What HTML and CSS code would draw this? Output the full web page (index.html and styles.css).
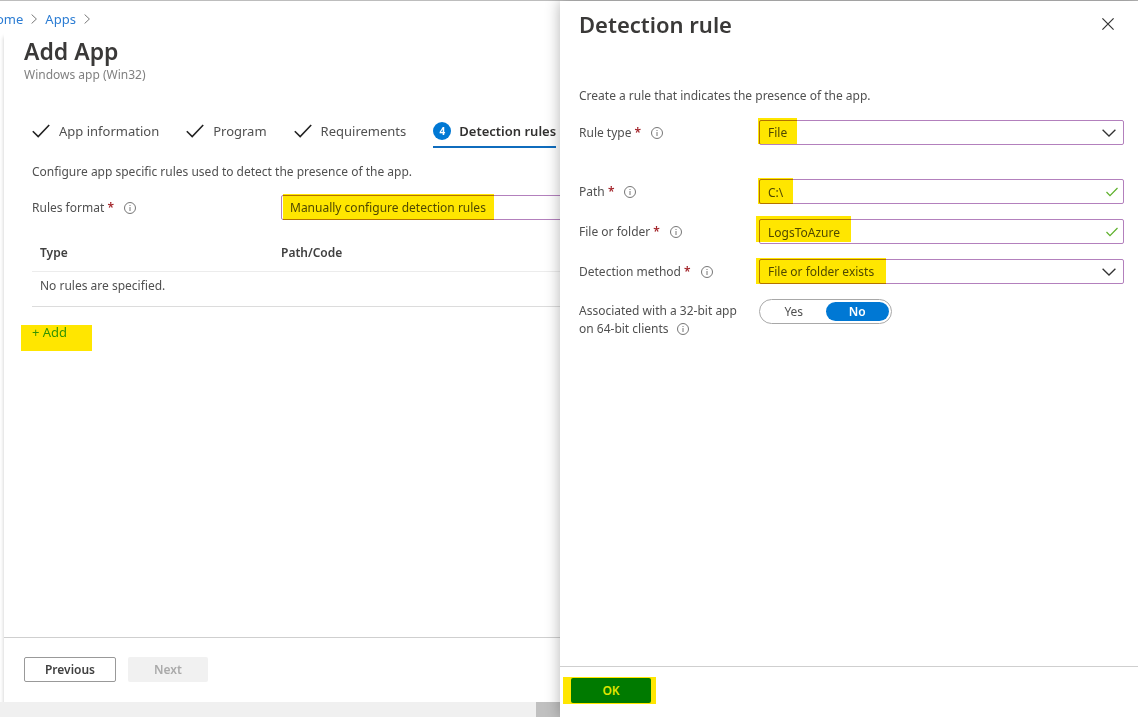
FILE: index.html
```html
<!DOCTYPE html>
<html lang="en">
<head>
<meta charset="utf-8">
<title>Add App - Detection rule</title>
<link rel="stylesheet" href="styles.css">
</head>
<body>
<svg class="sprite" aria-hidden="true">
  <symbol id="info" viewBox="0 0 12 12"><circle cx="6" cy="6" r="5.5" fill="none" stroke="currentColor" stroke-width="0.9"/><path d="M6 5v4M6 3v1" fill="none" stroke="currentColor" stroke-width="0.9"/></symbol>
  <symbol id="done" viewBox="0 0 18 14"><path d="M0.8 7.2l5.4 5.4L17.2 1" fill="none" stroke="currentColor" stroke-width="1.6"/></symbol>
  <symbol id="valid" viewBox="0 0 12 10"><path d="M0.5 5l3.5 3.7L11.5 1" fill="none" stroke="currentColor" stroke-width="1.2"/></symbol>
  <symbol id="down" viewBox="0 0 14 8"><path d="M0.6 0.7L7 7l6.4-6.3" fill="none" stroke="currentColor" stroke-width="1.3"/></symbol>
  <symbol id="right" viewBox="0 0 6 10"><path d="M0.6 0.5L5.4 5l-4.8 4.5" fill="none" stroke="currentColor"/></symbol>
  <symbol id="close" viewBox="0 0 12 12"><path d="M0.4 0.4l11.2 11.2M11.6 0.4L0.4 11.6" fill="none" stroke="currentColor" stroke-width="1.2"/></symbol>
</svg>
<div class="portal">
  <main class="workspace">
    <nav class="crumbs" aria-label="Breadcrumb">
      <a href="#home">ome</a><svg class="crumb-icon"><use href="#right"/></svg>
      <a href="#apps">Apps</a><svg class="crumb-icon"><use href="#right"/></svg>
    </nav>
    <section class="blade">
      <header class="blade-head">
        <h1>Add App</h1>
        <p class="subtitle">Windows app (Win32)</p>
      </header>
      <div class="blade-body">
        <div class="steps" role="tablist">
          <button class="step" role="tab"><svg class="done"><use href="#done"/></svg>App information</button>
          <button class="step" role="tab"><svg class="done"><use href="#done"/></svg>Program</button>
          <button class="step" role="tab"><svg class="done"><use href="#done"/></svg>Requirements</button>
          <button class="step current" role="tab" aria-selected="true"><span class="number">4</span>Detection rules</button>
        </div>
        <p class="intro">Configure app specific rules used to detect the presence of the app.</p>
        <div class="format-row">
          <label for="format">Rules format <span class="star">*</span><svg class="info"><use href="#info"/></svg></label>
          <div class="field">
            <select id="format"><option>Manually configure detection rules</option></select>
            <span class="mark mark-format"></span>
          </div>
        </div>
        <table class="rules">
          <thead><tr><th class="type">Type</th><th>Path/Code</th></tr></thead>
          <tbody><tr><td colspan="2">No rules are specified.</td></tr></tbody>
        </table>
        <div class="add"><a href="#add">+ Add</a></div>
      </div>
      <footer class="blade-foot">
        <button class="btn previous">Previous</button>
        <button class="btn next" disabled>Next</button>
      </footer>
    </section>
    <div class="scrollbar"><div class="thumb"></div></div>
  </main>
  <aside class="panel">
    <header class="panel-head">
      <h2>Detection rule</h2>
      <button class="close" aria-label="Close"><svg><use href="#close"/></svg></button>
    </header>
    <form class="panel-body">
      <p class="lead">Create a rule that indicates the presence of the app.</p>
      <div class="row first">
        <label for="ruletype">Rule type <span class="star">*</span><svg class="info"><use href="#info"/></svg></label>
        <div class="field"><select id="ruletype"><option>File</option></select><svg class="down"><use href="#down"/></svg><span class="mark mark-type"></span></div>
      </div>
      <div class="row">
        <label for="path">Path <span class="star">*</span><svg class="info"><use href="#info"/></svg></label>
        <div class="field"><input id="path" type="text" value="C:\"><svg class="valid"><use href="#valid"/></svg><span class="mark mark-path"></span></div>
      </div>
      <div class="row">
        <label for="file">File or folder <span class="star">*</span><svg class="info"><use href="#info"/></svg></label>
        <div class="field"><input id="file" type="text" value="LogsToAzure"><svg class="valid"><use href="#valid"/></svg><span class="mark mark-file"></span></div>
      </div>
      <div class="row">
        <label for="method">Detection method <span class="star">*</span><svg class="info"><use href="#info"/></svg></label>
        <div class="field"><select id="method"><option>File or folder exists</option></select><svg class="down"><use href="#down"/></svg><span class="mark mark-method"></span></div>
      </div>
      <div class="row">
        <span class="long" id="bits">Associated with a 32-bit app<br>on 64-bit clients <svg class="info"><use href="#info"/></svg></span>
        <div class="toggle" role="radiogroup" aria-labelledby="bits">
          <label><input type="radio" name="bits"><span>Yes</span></label>
          <label><input type="radio" name="bits" checked><span>No</span></label>
        </div>
      </div>
    </form>
    <footer class="panel-foot"><div class="ok-wrap"><button class="btn ok">OK</button></div></footer>
  </aside>
</div>
</body>
</html>
```
FILE: styles.css
```css
* { box-sizing: border-box; }
body {
  margin: 0;
  font: 12px/18px "Noto Sans", "Open Sans", sans-serif;
  color: #505050;
  background: #fff;
}
h1, h2, p { margin: 0; }
h1, h2 { line-height: 32px; font-weight: 600; color: #3a3938; }
h1 { font-size: 23px; }
h2 { font-size: 22px; }
button, input, select { font: inherit; color: inherit; }
button { cursor: pointer; }
a { color: #2b7cd3; text-decoration: none; }
.sprite { position: absolute; width: 0; height: 0; }

.portal {
  display: grid;
  grid-template-columns: minmax(0, 1fr) 578px;
  min-height: 100vh;
  border-top: 1px solid #bdbdbd;
}

/* Left workspace */
.workspace { display: flex; flex-direction: column; overflow: hidden; }
.crumbs {
  display: flex;
  align-items: center;
  gap: 8px;
  height: 32px;
  padding: 4px 0 0;
  margin-left: -4px;
  font-size: 13px;
}
.crumb-icon { width: 6px; height: 10px; color: #777; }
.blade {
  flex: 1;
  display: flex;
  flex-direction: column;
  margin-left: 4px;
  background: #fff;
  box-shadow: 0 4px 4px rgba(0, 0, 0, 0.22);
}
.blade-head { padding: 2px 20px 0; }
.subtitle { font-size: 12px; line-height: 16px; color: #808080; }
.blade-body { flex: 1; padding: 33px 0 0 28px; white-space: nowrap; }
.steps { display: flex; gap: 27px; font-size: 13px; }
.step {
  display: flex;
  align-items: center;
  gap: 9px;
  flex: none;
  height: 32px;
  padding: 0;
  border: 0;
  border-bottom: 2px solid transparent;
  background: none;
}
.done { width: 18px; height: 14px; color: #222; }
.step.current { gap: 8px; border-color: #0f6cbd; font-weight: 600; color: #323130; }
.number {
  width: 18px;
  height: 18px;
  border-radius: 50%;
  background: #0078d4;
  color: #fff;
  font-size: 10px;
  font-weight: 700;
}
.intro { padding: 15px 0 13px; }
.format-row { display: flex; align-items: center; padding: 1px 0 0; }
.format-row > label { flex: 0 0 249px; padding-top: 1px; }
.star { color: #a4262c; font-weight: 600; }
.info { width: 12px; height: 12px; margin-left: 10px; vertical-align: -2px; color: #666; }
.field { position: relative; flex: 1; }
.field input, .field select {
  display: block;
  appearance: none;
  width: 100%;
  height: 25px;
  padding: 1px 8px 0;
  border: 1px solid #b380bd;
  border-radius: 2px;
  background: #fff;
  outline: 0;
}
.format-row .field { margin-right: -20px; }
.rules { width: 100%; margin-top: 14px; border-collapse: collapse; border-bottom: 1px solid #dcdcdc; }
.rules th, .rules td { padding: 0 8px; text-align: left; }
.rules th { height: 37px; padding-top: 2px; font-weight: 600; color: #404040; border-bottom: 1px solid #ececec; }
.rules th:last-child { padding-left: 0; }
.rules .type { width: 249px; }
.rules td { height: 35px; padding-bottom: 6px; }
.add {
  width: 71px;
  height: 26px;
  margin: 18px 0 0 -11px;
  padding: 0 0 0 11px;
  line-height: 14px;
  background: #ffe600;
}
.add a { color: #359400; font-size: 13px; }
.blade-foot { display: flex; gap: 12px; padding: 19px 20px 20px; border-top: 1px solid #cfcfcf; }
.btn {
  width: 80px;
  height: 25px;
  padding: 0;
  border: 1px solid transparent;
  border-radius: 2px;
  font-weight: 600;
  line-height: 20px;
}
.previous { width: 92px; background: #fff; border-color: #999; color: #404040; }
.next { background: #f1f1f1; color: #aaa; }
.scrollbar { display: flex; justify-content: flex-end; background: #f0f0f0; }
.thumb { width: 24px; height: 15px; background: #c0c0c0; }

/* Right context panel */
.panel {
  position: relative;
  display: flex;
  flex-direction: column;
  background: #fff;
  box-shadow: 0 0 14px rgba(0, 0, 0, 0.3);
}
.panel-head { display: flex; justify-content: space-between; align-items: center; padding: 7px 20px 0 19px; }
.close { width: 20px; height: 20px; padding: 4px; border: 0; background: none; color: #333; }
.close svg { display: block; width: 12px; height: 12px; }
.panel-body { flex: 1; padding: 47px 14px 0 19px; }
.lead { margin-bottom: 15px; }
.row { display: flex; align-items: flex-start; height: 25px; margin-bottom: 15px; }
.row.first { margin-bottom: 34px; }
.row > label, .long { flex: 0 0 180px; padding-top: 4px; }
.row > .long { padding-top: 3px; white-space: nowrap; }
.long .info { margin-left: 5px; }
.down { position: absolute; right: 8px; top: 9px; width: 14px; height: 8px; color: #333; }
.valid { position: absolute; right: 6px; top: 8px; width: 12px; height: 10px; color: #5db02a; }

/* Highlighter strokes laid over the fields */
.mark { position: absolute; height: 26px; background: #ffe600; mix-blend-mode: multiply; pointer-events: none; }
.mark-format { left: 2px; top: -1px; width: 211px; }
.mark-type { left: -1px; top: -2px; width: 39px; }
.mark-path { left: -1px; top: -1px; width: 35px; }
.mark-file { left: -3px; top: -3px; width: 95px; }
.mark-method { left: -3px; top: -1px; width: 130px; }

.toggle {
  display: flex;
  width: 133px;
  height: 25px;
  padding: 2px;
  border: 1px solid #a8a8a8;
  border-radius: 13px;
}
.toggle label { position: relative; flex: 1; cursor: pointer; }
.toggle input { position: absolute; opacity: 0; margin: 0; }
.toggle span { display: block; border-radius: 10px; line-height: 19px; text-align: center; }
.toggle input:checked + span { background: #0078d4; color: #fff; font-weight: 600; }
.panel-foot { border-top: 1px solid #cfcfcf; padding: 10px 3px 13px; }
.ok-wrap { width: 93px; height: 27px; padding: 1px 8px; background: #ffe600; }
.ok { display: block; background: #007a00; color: #e0e600; }
```
